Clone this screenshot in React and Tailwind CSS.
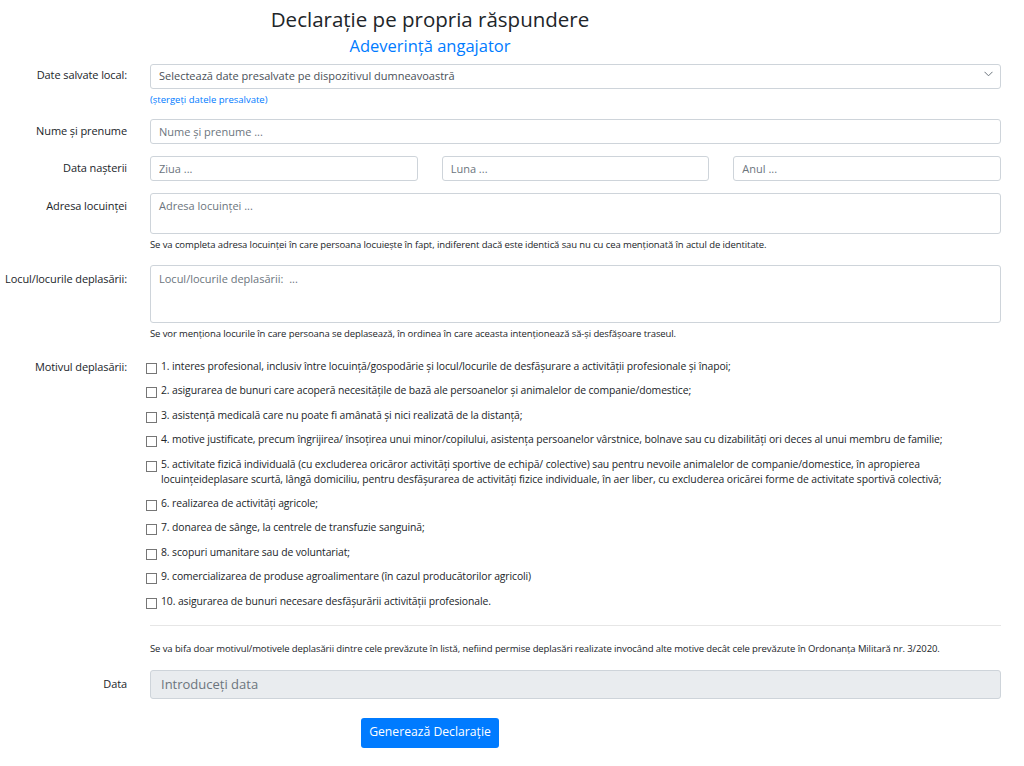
import React, { useState } from 'react';

const motive = [
  '1. interes profesional, inclusiv între locuință/gospodărie și locul/locurile de desfășurare a activității profesionale și înapoi;',
  '2. asigurarea de bunuri care acoperă necesitățile de bază ale persoanelor și animalelor de companie/domestice;',
  '3. asistență medicală care nu poate fi amânată și nici realizată de la distanță;',
  '4. motive justificate, precum îngrijirea/ însoțirea unui minor/copilului, asistența persoanelor vârstnice, bolnave sau cu dizabilități ori deces al unui membru de familie;',
  '5. activitate fizică individuală (cu excluderea oricăror activități sportive de echipă/ colective) sau pentru nevoile animalelor de companie/domestice, în apropierea locuințeideplasare scurtă, lângă domiciliu, pentru desfășurarea de activități fizice individuale, în aer liber, cu excluderea oricărei forme de activitate sportivă colectivă;',
  '6. realizarea de activități agricole;',
  '7. donarea de sânge, la centrele de transfuzie sanguină;',
  '8. scopuri umanitare sau de voluntariat;',
  '9. comercializarea de produse agroalimentare (în cazul producătorilor agricoli)',
  '10. asigurarea de bunuri necesare desfășurării activității profesionale.',
];

const inputCls =
  'h-[25px] w-full rounded-[3px] border border-[#ced4da] bg-white px-[8px] text-[11px] text-[#495057] placeholder:text-[#6c757d] outline-none';

const Label = ({ children, className = '' }) => (
  <div className={`w-[150px] shrink-0 pr-[23px] text-right text-[11px] tracking-[-0.1px] text-[#212529] ${className}`}>{children}</div>
);

const App = () => {
  const [bifate, setBifate] = useState([]);

  const toggle = (i) =>
    setBifate((b) => (b.includes(i) ? b.filter((x) => x !== i) : [...b, i]));

  return (
    <div className="min-h-[766px] bg-white pr-[23px] font-['Open_Sans',sans-serif] text-[#212529]">
      {/* Antet */}
      <div className="w-[860px] pt-[6px] text-center">
        <h1 className="text-[20.5px] leading-[27px] text-[#212529]">Declarație pe propria răspundere</h1>
        <h2 className="mt-[1px] text-[16.5px] leading-[23px] text-[#007bff]">Adeverință angajator</h2>
      </div>

      {/* Date salvate */}
      <div className="mt-[5px] flex">
        <Label className="pt-[5px]">Date salvate local:</Label>
        <div className="flex-1">
          <div className="relative">
            <select className={`${inputCls} appearance-none text-[#495057]`}>
              <option>Selectează date presalvate pe dispozitivul dumneavoastră</option>
            </select>
            <svg className="pointer-events-none absolute right-[8px] top-[9px]" width="9" height="6" viewBox="0 0 9 6">
              <path d="M0.5 0.8 L4.5 4.8 L8.5 0.8" fill="none" stroke="#6c757d" strokeWidth="1" />
            </svg>
          </div>
          <a href="#" className="mt-[4px] block text-[9.5px] text-[#007bff]">(ștergeți datele presalvate)</a>
        </div>
      </div>

      {/* Nume */}
      <div className="mt-[12px] flex items-center">
        <Label>Nume și prenume</Label>
        <input className={`${inputCls} flex-1`} placeholder="Nume și prenume ..." />
      </div>

      {/* Data nasterii */}
      <div className="mt-[12px] flex items-center">
        <Label>Data nașterii</Label>
        <div className="grid flex-1 grid-cols-3 gap-[24px]">
          <input className={inputCls} placeholder="Ziua ..." />
          <input className={inputCls} placeholder="Luna ..." />
          <input className={inputCls} placeholder="Anul ..." />
        </div>
      </div>

      {/* Adresa */}
      <div className="mt-[12px] flex">
        <Label className="pt-[5px]">Adresa locuinței</Label>
        <div className="flex-1">
          <textarea
            className="block h-[41px] w-full resize-none rounded-[3px] border border-[#ced4da] px-[8px] py-[4px] text-[11px] outline-none placeholder:text-[#6c757d]"
            placeholder="Adresa locuinței ..."
          />
          <p className="mt-[4px] text-[9.5px] leading-[14px] tracking-[-0.1px]">
            Se va completa adresa locuinței în care persoana locuiește în fapt, indiferent dacă este identică sau nu cu cea menționată în actul de identitate.
          </p>
        </div>
      </div>

      {/* Locul deplasarii */}
      <div className="mt-[13px] flex">
        <Label className="pt-[6px]">Locul/locurile deplasării:</Label>
        <div className="flex-1">
          <textarea
            className="block h-[58px] w-full resize-none rounded-[3px] border border-[#ced4da] px-[8px] py-[5px] text-[11px] outline-none placeholder:text-[#6c757d]"
            placeholder="Locul/locurile deplasării:  ..."
          />
          <p className="mt-[4px] text-[9.5px] leading-[14px] tracking-[-0.1px]">
            Se vor menționa locurile în care persoana se deplasează, în ordinea în care aceasta intenționează să-și desfășoare traseul.
          </p>
        </div>
      </div>

      {/* Motivul */}
      <div className="mt-[18px] flex">
        <Label className="leading-[15px]">Motivul deplasării:</Label>
        <div className="-ml-[4px] flex flex-1 flex-col gap-[9.4px]">
          {motive.map((m, i) => (
            <label key={i} className="flex items-start gap-[4px] text-[10.4px] leading-[15px] tracking-[-0.1px]">
              <input
                type="checkbox"
                checked={bifate.includes(i)}
                onChange={() => toggle(i)}
                className="mt-[4px] h-[11px] w-[11px] shrink-0 appearance-none border border-[#767676] bg-white"
              />
              <span>{m}</span>
            </label>
          ))}
        </div>
      </div>

      {/* Nota */}
      <div className="mt-[16px] flex">
        <div className="w-[150px] shrink-0" />
        <div className="flex-1">
          <hr className="border-t border-[#e6e6e6]" />
          <p className="mt-[16px] text-[9.5px] leading-[14px] tracking-[-0.1px]">
            Se va bifa doar motivul/motivele deplasării dintre cele prevăzute în listă, nefiind permise deplasări realizate invocând alte motive decât cele prevăzute în Ordonanța Militară nr. 3/2020.
          </p>
        </div>
      </div>

      {/* Data */}
      <div className="mt-[14px] flex items-center">
        <Label>Data</Label>
        <input
          disabled
          className="h-[29px] flex-1 rounded-[3px] border border-[#ced4da] bg-[#e9ecef] px-[10px] text-[13px] placeholder:text-[#6c757d]"
          placeholder="Introduceți data"
        />
      </div>

      <div className="mt-[19px] w-[860px] text-center">
        <button className="h-[30px] rounded-[3px] bg-[#007bff] px-[8px] text-[12.2px] text-white">
          Generează Declarație
        </button>
      </div>
    </div>
  );
};

export default App;
